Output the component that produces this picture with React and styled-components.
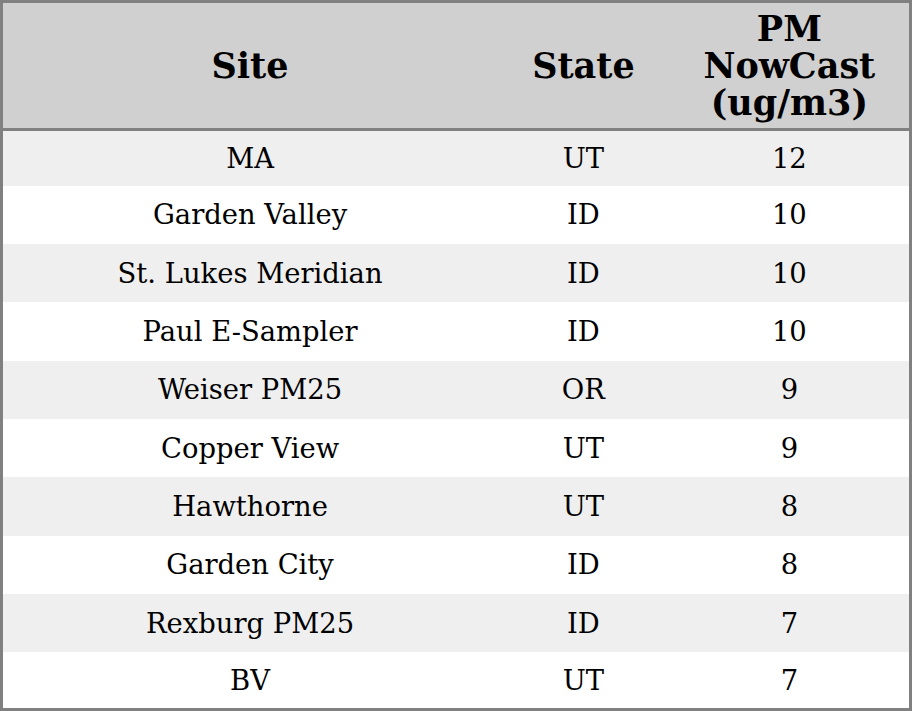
import React from 'react';
import styled, {createGlobalStyle} from 'styled-components';

const GlobalStyle = createGlobalStyle`
  html, body {
    margin: 0;
    padding: 0;
    height: 100%;
    background: #ffffff;
  }
  #root {
    height: 100%;
  }
`;

const Table = styled.table`
  width: 912px;
  height: 711px;
  border-collapse: collapse;
  border: 3px solid #808080;
  font-family: "DejaVu Serif", serif;
  color: #000;
  table-layout: fixed;
`;

const HeadCell = styled.th`
  background: #d0d0d0;
  font-size: 35px;
  font-weight: bold;
  line-height: 37px;
  height: 125px;
  padding: 0 4px;
  text-align: center;
  border-bottom: 3px solid #808080;
`;

const Row = styled.tr`
  height: 58px;
  background: ${props => (props.odd ? '#efefef' : '#ffffff')};

  &:first-child {
    height: 56px;
  }

  &:last-child {
    height: 57px;
  }
`;

const Cell = styled.td`
  font-size: 27.4px;
  text-align: center;
  padding: 0;
`;

const rows = [
    ['MA', 'UT', 12],
    ['Garden Valley', 'ID', 10],
    ['St. Lukes Meridian', 'ID', 10],
    ['Paul E-Sampler', 'ID', 10],
    ['Weiser PM25', 'OR', 9],
    ['Copper View', 'UT', 9],
    ['Hawthorne', 'UT', 8],
    ['Garden City', 'ID', 8],
    ['Rexburg PM25', 'ID', 7],
    ['BV', 'UT', 7],
];

export default function App() {
    return (
        <>
            <GlobalStyle/>
            <Table>
                <colgroup>
                    <col style={{width: 494}}/>
                    <col style={{width: 172}}/>
                    <col style={{width: 240}}/>
                </colgroup>
                <thead>
                <tr>
                    <HeadCell>Site</HeadCell>
                    <HeadCell>State</HeadCell>
                    <HeadCell>PM<br/>NowCast<br/>(ug/m3)</HeadCell>
                </tr>
                </thead>
                <tbody>
                {rows.map((r, i) => (
                    <Row key={r[0]} odd={i % 2 === 0}>
                        <Cell>{r[0]}</Cell>
                        <Cell>{r[1]}</Cell>
                        <Cell>{r[2]}</Cell>
                    </Row>
                ))}
                </tbody>
            </Table>
        </>
    );
}
